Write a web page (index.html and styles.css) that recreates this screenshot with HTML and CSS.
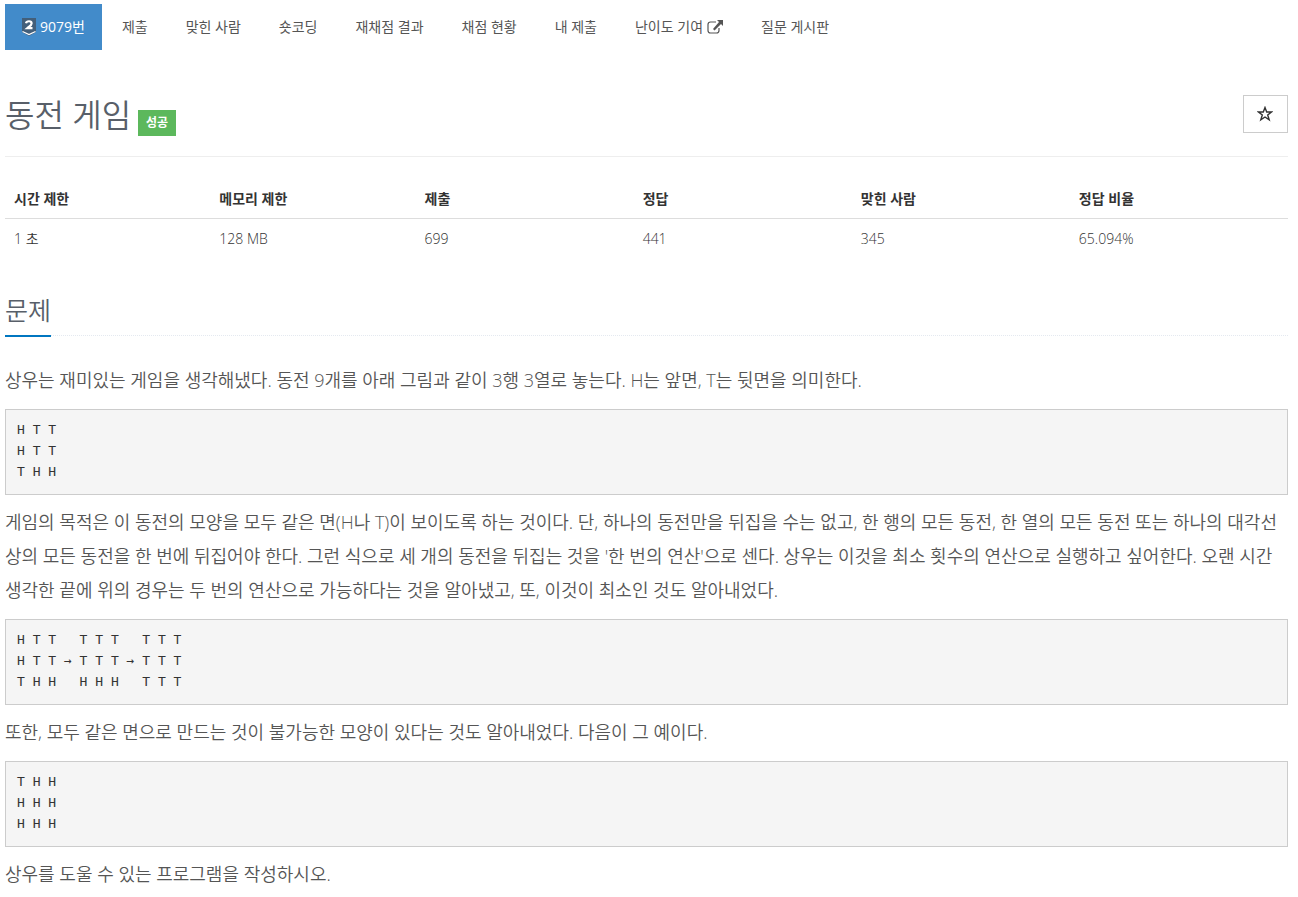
FILE: index.html
```html
<!DOCTYPE html>
<html lang="ko">
<head>
    <meta charset="UTF-8">
    <meta name="viewport" content="width=device-width, initial-scale=1.0">
    <title>9079번: 동전 게임</title>
    <link rel="stylesheet" href="styles.css">
</head>
<body>
    <ul class="problem-menu">
        <li class="active"><a href="#">
            <svg class="tier" viewBox="0 0 14 18" width="14" height="18">
                <path d="M0 0h14v14l-7 4-7-4z" fill="#435f7a"/>
                <path d="M.5 13.500l6.500 3 6.500-3" fill="none" stroke="#fff" stroke-width="1.200"/>
                <path d="M4 5.200C4.600 2.600 9.600 2.600 9.600 5.400 9.600 7.200 7.200 8.400 5.200 10.200h5.300" fill="none" stroke="#fff" stroke-width="2.200"/>
            </svg>
            9079번</a></li>
        <li><a href="#">제출</a></li>
        <li><a href="#">맞힌 사람</a></li>
        <li><a href="#">숏코딩</a></li>
        <li><a href="#">재채점 결과</a></li>
        <li><a href="#">채점 현황</a></li>
        <li><a href="#">내 제출</a></li>
        <li><a href="#">난이도 기여<svg class="external" viewBox="0 0 16 14" width="16" height="14">
                <path d="M9 2H3.5Q1 2 1 4.5V10.5Q1 13 3.5 13H9.5Q12 13 12 10.5V8" fill="none" stroke="currentColor" stroke-width="1.2"/>
                <path d="M10 0h6v6l-2-2-6.5 6.5-1.5-1.5L12 2z" fill="currentColor"/>
            </svg></a></li>
        <li><a href="#">질문 게시판</a></li>
    </ul>

    <div class="page-header">
        <h1>동전 게임</h1>
        <span class="label-success">성공</span>
        <button type="button" class="btn-star" aria-label="즐겨찾기">
            <svg viewBox="0 0 16 16" width="16" height="16">
                <path d="M8 1.5L9.7 6H14.5L10.7 9 12.2 13.8 8 11 3.8 13.8 5.3 9 1.5 6H6.3z" fill="none" stroke="#333" stroke-width="1.4"/>
            </svg>
        </button>
    </div>

    <table class="info">
        <thead>
            <tr>
                <th class="limit">시간 제한</th>
                <th class="limit">메모리 제한</th>
                <th class="count">제출</th>
                <th class="count">정답</th>
                <th class="count">맞힌 사람</th>
                <th>정답 비율</th>
            </tr>
        </thead>
        <tbody>
            <tr>
                <td>1 초</td>
                <td>128 MB</td>
                <td>699</td>
                <td>441</td>
                <td>345</td>
                <td>65.094%</td>
            </tr>
        </tbody>
    </table>

    <section>
        <div class="headline">
            <h2>문제</h2>
        </div>
        <div class="problem-text">
            <p>상우는 재미있는 게임을 생각해냈다. 동전 9개를 아래 그림과 같이 3행 3열로 놓는다. H는 앞면, T는 뒷면을 의미한다.</p>
<pre>H T T
H T T
T H H</pre>
            <p>게임의 목적은 이 동전의 모양을 모두 같은 면(H나 T)이 보이도록 하는 것이다. 단, 하나의 동전만을 뒤집을 수는 없고, 한 행의 모든 동전, 한 열의 모든 동전 또는 하나의 대각선 상의 모든 동전을 한 번에 뒤집어야 한다. 그런 식으로 세 개의 동전을 뒤집는 것을 '한 번의 연산'으로 센다. 상우는 이것을 최소 횟수의 연산으로 실행하고 싶어한다. 오랜 시간 생각한 끝에 위의 경우는 두 번의 연산으로 가능하다는 것을 알아냈고, 또, 이것이 최소인 것도 알아내었다.</p>
<pre>H T T   T T T   T T T
H T T → T T T → T T T
T H H   H H H   T T T</pre>
            <p>또한, 모두 같은 면으로 만드는 것이 불가능한 모양이 있다는 것도 알아내었다. 다음이 그 예이다.</p>
<pre>T H H
H H H
H H H</pre>
            <p>상우를 도울 수 있는 프로그램을 작성하시오.</p>
        </div>
    </section>
</body>
</html>
```
FILE: styles.css
```css
* {
    box-sizing: border-box;
}
body {
    margin: 0;
    padding: 4px 10px 0 5px;
    background: #fff;
    color: #333;
    font-family: "Open Sans", "Noto Sans CJK KR", sans-serif;
    font-size: 14px;
    line-height: 22px;
}
.problem-menu {
    display: flex;
    flex-wrap: wrap;
    gap: 2px;
    margin: 0;
    padding: 0;
    list-style: none;
}
.problem-menu a {
    display: flex;
    align-items: center;
    gap: 4px;
    height: 46px;
    padding: 0 18px;
    color: #555;
    text-decoration: none;
}
.problem-menu .active a {
    padding: 0 17px;
    background: #428bca;
    color: #fff;
}
.page-header {
    display: flex;
    align-items: flex-start;
    margin-top: 45px;
    height: 62px;
    border-bottom: 1px solid #eee;
}
h1 {
    margin: 0 7px 0 0;
    color: #585f69;
    font-size: 32px;
    font-weight: 350;
    line-height: 40px;
}
.label-success {
    margin-top: 15px;
    padding: 0 8px;
    background: #5cb85c;
    color: #fff;
    font-size: 12px;
    font-weight: 700;
    line-height: 26px;
}
.btn-star {
    display: flex;
    align-items: center;
    justify-content: center;
    width: 45px;
    height: 38px;
    margin-left: auto;
    padding: 0 1px 0 0;
    border: 1px solid #ccc;
    background: #fff;
}
.info {
    width: 100%;
    margin-top: 23px;
    border-collapse: collapse;
    table-layout: fixed;
    text-align: left;
}
.info th,
.info td {
    padding: 8px 9px;
}
.info th {
    border-bottom: 1px solid #ddd;
    font-weight: 700;
}
.info td {
    padding-top: 9px;
    font-weight: 350;
}
.info .limit {
    width: 16%;
}
.info .count {
    width: 17%;
}
.headline {
    display: flex;
    margin: 35px 0 27px;
    border-bottom: 1px dotted #e4e9f0;
}
h2 {
    margin: 0 0 -2px;
    padding-bottom: 8px;
    border-bottom: 2px solid #0076c0;
    color: #585f69;
    font-size: 25px;
    font-weight: 350;
    line-height: 34px;
}
.problem-text p {
    margin: 0 0 12px;
    color: #555;
    font-size: 18px;
    font-weight: 350;
    line-height: 34px;
}
pre {
    margin: 0 0 10px;
    padding: 9px 11px 12px;
    border: 1px solid #ccc;
    background: #f5f5f5;
    color: #333;
    font-family: "DejaVu Sans Mono", monospace;
    font-size: 13px;
    line-height: 21px;
}
```
